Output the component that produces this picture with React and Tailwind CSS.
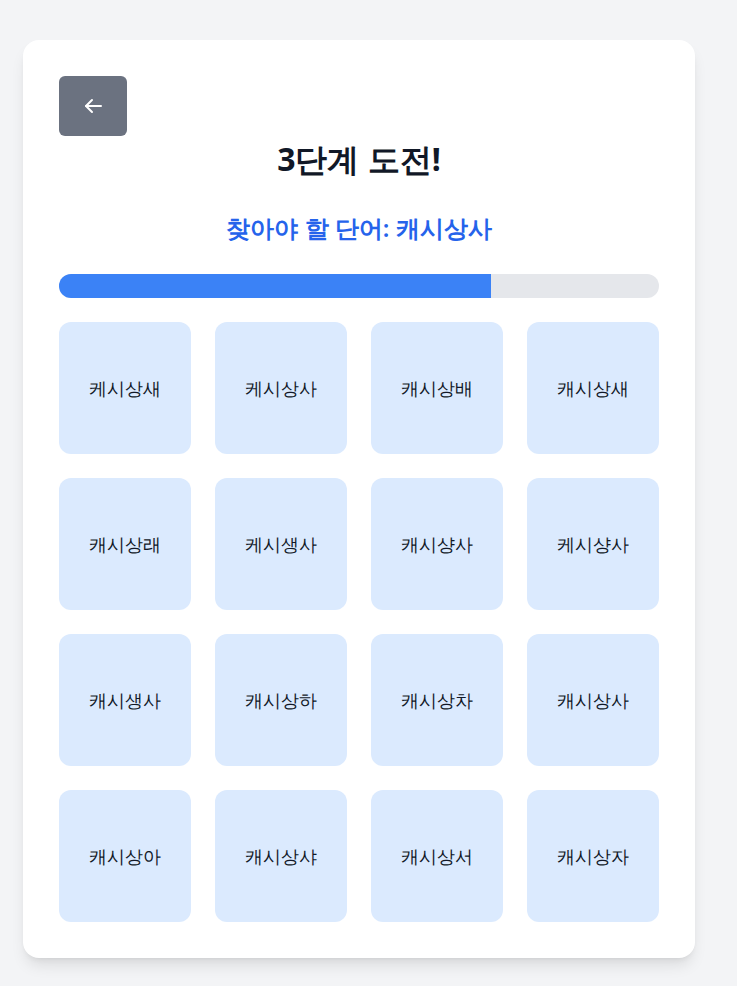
import { useState } from "react";

// Grille du niveau 3 : le mot cible est caché parmi des variantes proches.
const CIBLE = "캐시상사";

const MOTS = [
    "케시상새", "케시상사", "캐시상배", "캐시상새",
    "캐시상래", "케시생사", "캐시샹사", "케시샹사",
    "캐시생사", "캐시상하", "캐시상차", "캐시상사",
    "캐시상아", "캐시상샤", "캐시상서", "캐시상자",
];

function FlecheRetour() {
    return (
        <svg width="19" height="16" viewBox="0 0 19 16" fill="none" stroke="currentColor" strokeWidth="2" strokeLinecap="round" strokeLinejoin="round">
            <path d="M17 8H2" />
            <path d="M8 2L2 8l6 6" />
        </svg>
    );
}

export default function App() {
    const [progression] = useState(72);

    return (
        <div className="min-h-screen bg-[#f3f4f6] pt-10 pb-10 pl-[23px]">
            <div className="w-[672px] rounded-2xl bg-white p-9 shadow-lg">
                {/* Bouton retour */}
                <button
                    type="button"
                    className="flex h-[60px] w-[68px] items-center justify-center rounded-md bg-[#6b7280] text-white"
                >
                    <FlecheRetour />
                </button>

                <h1 className="mt-[5px] text-center text-[32px] leading-9 font-bold text-[#111827]">
                    3단계 도전!
                </h1>
                <p className="mt-[35px] text-center text-2xl font-semibold text-[#2563eb]">
                    찾아야 할 단어: {CIBLE}
                </p>

                {/* Barre de progression */}
                <div className="mt-[30px] h-6 w-full overflow-hidden rounded-full bg-[#e5e7eb]">
                    <div className="h-full bg-[#3b82f6]" style={{ width: `${progression}%` }} />
                </div>

                {/* Grille des mots */}
                <div className="mt-6 grid grid-cols-4 gap-6">
                    {MOTS.map((mot, i) => (
                        <button
                            key={i}
                            type="button"
                            className="flex aspect-square items-center justify-center rounded-xl bg-[#dbeafe] text-lg text-[#111827]"
                        >
                            {mot}
                        </button>
                    ))}
                </div>
            </div>
        </div>
    );
}
